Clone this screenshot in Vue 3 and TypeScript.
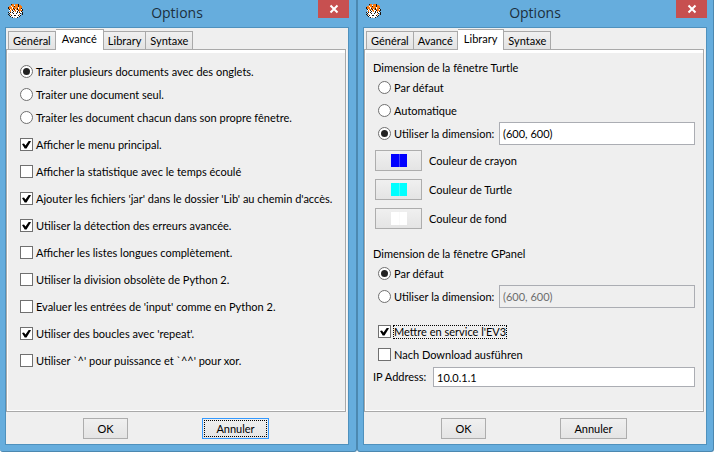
<script setup lang="ts">
import { computed, ref } from 'vue'

type TabName = 'Général' | 'Avancé' | 'Library' | 'Syntaxe'
const tabs: TabName[] = ['Général', 'Avancé', 'Library', 'Syntaxe']

const dialogs: { id: string; active: TabName; defaultButton: boolean }[] = [
  { id: 'advanced', active: 'Avancé', defaultButton: true },
  { id: 'library', active: 'Library', defaultButton: false },
]

const docMode = ref('tabs')
const docModes = [
  { value: 'tabs', label: 'Traiter plusieurs documents avec des onglets.' },
  { value: 'single', label: 'Traiter une document seul.' },
  { value: 'windows', label: 'Traiter les document chacun dans son propre fênetre.' },
]

const switches = ref([
  { label: 'Afficher le menu principal.', on: true },
  { label: 'Afficher la statistique avec le temps écoulé', on: false },
  { label: "Ajouter les fichiers 'jar' dans le dossier 'Lib' au chemin d'accès.", on: true },
  { label: 'Utiliser la détection des erreurs avancée.', on: true },
  { label: 'Afficher les listes longues complètement.', on: false },
  { label: 'Utiliser la division obsolète de Python 2.', on: false },
  { label: "Evaluer les entrées de 'input' comme en Python 2.", on: false },
  { label: "Utiliser des boucles avec 'repeat'.", on: true },
  { label: "Utiliser `^' pour puissance et `^^' pour xor.", on: false },
])

const turtleMode = ref('custom')
const turtleSize = ref('(600, 600)')
const panelMode = ref('default')
const panelSize = ref('(600, 600)')
const ev3 = ref(true)
const runAfterDownload = ref(false)
const ipAddress = ref('10.0.1.1')

const colours = [
  { id: 'pen', label: 'Couleur de crayon' },
  { id: 'turtle', label: 'Couleur de Turtle' },
  { id: 'back', label: 'Couleur de fond' },
]

// Pixel map of the tiger-head icon: k black, o orange, w white, g grey.
const sprite = [
  '...koo.oook....',
  '...ooowoookoo..',
  '.oowookoookooo.',
  'kooowooooowooo.',
  'kooowkoookwook.',
  '.kwoookwokooowk',
  '.wowkwoowwkoook',
  '..owwkwowkwowk.',
  'kwkwkwwwwkwkwwk',
  '.kwwwkwwkwwwk.k',
  'k.owwwwwwwwow.k',
  '.kwkwwkkwwkwk..',
  '..kwwwwwwwwk...',
  '....kwgwwk.....',
]
const tones: Record<string, string> = { k: '#1b1510', o: '#f97a12', w: '#ffffff', g: '#b9a99c' }
const pixels = computed(() =>
  sprite.flatMap((row, y) =>
    [...row].map((c, x) => ({ x, y, fill: tones[c] })).filter((p) => p.fill),
  ),
)
</script>

<template>
  <main class="desktop">
    <section v-for="d in dialogs" :key="d.id" class="window" :class="d.id">
      <header class="titlebar">
        <svg class="logo" viewBox="0 0 15 14" shape-rendering="crispEdges" aria-hidden="true">
          <rect v-for="(p, i) in pixels" :key="i" :x="p.x" :y="p.y" width="1" height="1" :fill="p.fill" />
        </svg>
        <h1>Options</h1>
        <button type="button" class="close" aria-label="Fermer">
          <svg viewBox="0 0 8 8" aria-hidden="true"><path d="M0.5 0.5L7.5 7.5M7.5 0.5L0.5 7.5" /></svg>
        </button>
      </header>

      <div class="client">
        <nav class="tabs" role="tablist">
          <button
            v-for="t in tabs"
            :key="t"
            type="button"
            role="tab"
            class="tab"
            :class="{ active: t === d.active }"
            :aria-selected="t === d.active"
          >{{ t }}</button>
        </nav>

        <div v-if="d.id === 'advanced'" class="panel">
          <label v-for="m in docModes" :key="m.value" class="row">
            <input v-model="docMode" type="radio" name="doc-mode" :value="m.value" />
            <span>{{ m.label }}</span>
          </label>
          <div class="switches">
            <label v-for="s in switches" :key="s.label" class="row tall">
              <input v-model="s.on" type="checkbox" />
              <span>{{ s.label }}</span>
            </label>
          </div>
        </div>

        <div v-else class="panel">
          <h2>Dimension de la fênetre Turtle</h2>
          <label class="row"><input v-model="turtleMode" type="radio" name="turtle" value="default" /><span>Par défaut</span></label>
          <label class="row"><input v-model="turtleMode" type="radio" name="turtle" value="auto" /><span>Automatique</span></label>
          <div class="size-row">
            <label class="row"><input v-model="turtleMode" type="radio" name="turtle" value="custom" /><span>Utiliser la dimension:</span></label>
            <input v-model="turtleSize" class="field" type="text" aria-label="Dimension de la fênetre Turtle" />
          </div>
          <div class="colours">
            <div v-for="c in colours" :key="c.id" class="colour">
              <button :id="'colour-' + c.id" type="button" class="push swatch" :class="c.id"><i></i><i></i></button>
              <label :for="'colour-' + c.id">{{ c.label }}</label>
            </div>
          </div>
          <h2>Dimension de la fênetre GPanel</h2>
          <label class="row"><input v-model="panelMode" type="radio" name="gpanel" value="default" /><span>Par défaut</span></label>
          <div class="size-row">
            <label class="row"><input v-model="panelMode" type="radio" name="gpanel" value="custom" /><span>Utiliser la dimension:</span></label>
            <input v-model="panelSize" class="field" type="text" aria-label="Dimension de la fênetre GPanel" :disabled="panelMode !== 'custom'" />
          </div>
          <div class="robot">
            <label class="row"><input v-model="ev3" type="checkbox" /><span class="focused">Mettre en service l'EV3</span></label>
            <label class="row"><input v-model="runAfterDownload" type="checkbox" /><span>Nach Download ausführen</span></label>
          </div>
          <div class="address">
            <label for="ip">IP Address:</label>
            <input id="ip" v-model="ipAddress" class="field" type="text" />
          </div>
        </div>

        <footer class="actions">
          <button type="button" class="push ok">OK</button>
          <button type="button" class="push cancel" :class="{ default: d.defaultButton }"><span>Annuler</span></button>
        </footer>
      </div>
    </section>
  </main>
</template>

<style>
body {
  margin: 0;
  background: #fff;
}
</style>

<style scoped>
* {
  box-sizing: border-box;
}
.desktop {
  display: flex;
  font: 11px/16px Lato, 'Noto Sans', sans-serif;
  color: #000;
}
.window {
  flex: 1;
  min-width: 0;
  padding: 0 7px 6px 5px;
  background: #66addd;
  border: 1px solid #4c88b0;
  border-width: 0 1px 1px 0;
  border-radius: 0 0 3px 3px;
}
.window.library {
  padding-right: 6px;
  border-left-width: 1px;
}
button,
input {
  font: inherit;
  color: inherit;
  margin: 0;
}
.titlebar {
  display: grid;
  grid-template-columns: 31px 1fr 31px;
  align-items: start;
  height: 27px;
}
.logo {
  width: 15px;
  height: 14px;
  margin: 4px 0 0 3px;
}
h1 {
  margin: 0;
  font: 400 14px/26px 'Open Sans', 'Noto Sans', sans-serif;
  color: #1c303d;
  text-align: center;
}
.close {
  display: grid;
  place-items: center;
  width: 31px;
  height: 18px;
  padding: 0;
  border: 0;
  background: #c75050;
}
.close svg {
  width: 8px;
  height: 8px;
  overflow: visible;
}
.close path {
  stroke: #fff;
  stroke-width: 2;
}
.client {
  background: #efefef;
  border: 1px solid #4f91bd;
}
.tabs {
  display: flex;
  align-items: flex-end;
  height: 21px;
  padding-left: 2px;
}
.tab {
  height: 18px;
  padding: 0 4px;
  border: 1px solid #a9a9a9;
  border-left-width: 0;
  border-bottom: 0;
  background: linear-gradient(#f0f0f0, #e3e3e3);
  line-height: 18px;
}
.tab:first-child {
  border-left-width: 1px;
}
.tab.active {
  position: relative;
  height: 20px;
  padding: 0 6px 2px;
  background: #fff;
}
.tab.active::after {
  content: '';
  position: absolute;
  inset: auto 0 -1px;
  height: 1px;
  background: #fff;
}
.panel {
  height: 363px;
  margin-right: 2px;
  padding: 10px 12px 0 13px;
  border: 1px solid #a9a9a9;
  box-shadow: inset 1px -1px #fff, inset 0 3px #fff, 1px 0 #f9f9f9;
}
.library .panel {
  padding: 10px 8px 0;
}
.row {
  display: flex;
  align-items: center;
  height: 23px;
  gap: 3px;
  white-space: nowrap;
}
.row.tall {
  height: 27px;
}
.switches {
  padding-top: 2px;
}
input[type='radio'],
input[type='checkbox'] {
  appearance: none;
  flex: none;
  display: grid;
  place-items: center;
  width: 13px;
  height: 13px;
  border: 1px solid #707070;
  background: #fff;
}
input[type='radio'] {
  border-radius: 50%;
}
input[type='radio']:checked::before {
  content: '';
  width: 7px;
  height: 7px;
  border-radius: 50%;
  background: #222;
}
input[type='checkbox']:checked::before {
  content: '';
  width: 9px;
  height: 8px;
  background: #000;
  clip-path: polygon(0 44%, 22% 36%, 39% 62%, 78% 0, 100% 10%, 50% 100%, 30% 100%);
}
h2 {
  margin: 0;
  font: inherit;
}
.library .row {
  padding-left: 5px;
}
.size-row {
  display: grid;
  grid-template-columns: 126px 1fr;
}
.field {
  min-width: 0;
  padding: 0 3px;
  border: 1px solid #abadb3;
  border-radius: 0;
  background: #fff;
}
.field:disabled {
  background: #efefef;
  color: #6d6d6d;
}
.push {
  height: 21px;
  padding: 0;
  border: 1px solid #adadad;
  background: linear-gradient(#f0f0f0, #e4e4e4);
}
.colours {
  display: grid;
  gap: 8px;
  padding: 5px 0 17px 2px;
}
.colour {
  display: flex;
  align-items: center;
  gap: 7px;
}
.swatch {
  display: flex;
  justify-content: center;
  align-items: center;
  width: 47px;
}
.swatch i {
  width: 8px;
  height: 13px;
  background: currentColor;
}
.swatch i + i {
  box-shadow: inset 1px 0 rgb(239 239 239 / 30%);
}
.swatch.pen {
  color: #00f;
}
.swatch.turtle {
  color: #0ff;
}
.swatch.back {
  color: #fff;
}
.robot {
  padding: 12px 0 1px;
}
.focused {
  line-height: 12px;
  outline: 1px dotted #000;
}
.address {
  display: grid;
  grid-template-columns: 60px 1fr;
  align-items: center;
}
.address .field {
  height: 20px;
}
.actions {
  display: flex;
  justify-content: center;
  gap: 74px;
  padding: 6px 2px 5px 0;
}
.ok {
  width: 45px;
}
.cancel {
  width: 67px;
}
.default {
  display: flex;
  padding: 1px;
  border-color: #3399ff;
}
.default span {
  flex: 1;
  border: 1px dotted #000;
  line-height: 15px;
}
</style>
